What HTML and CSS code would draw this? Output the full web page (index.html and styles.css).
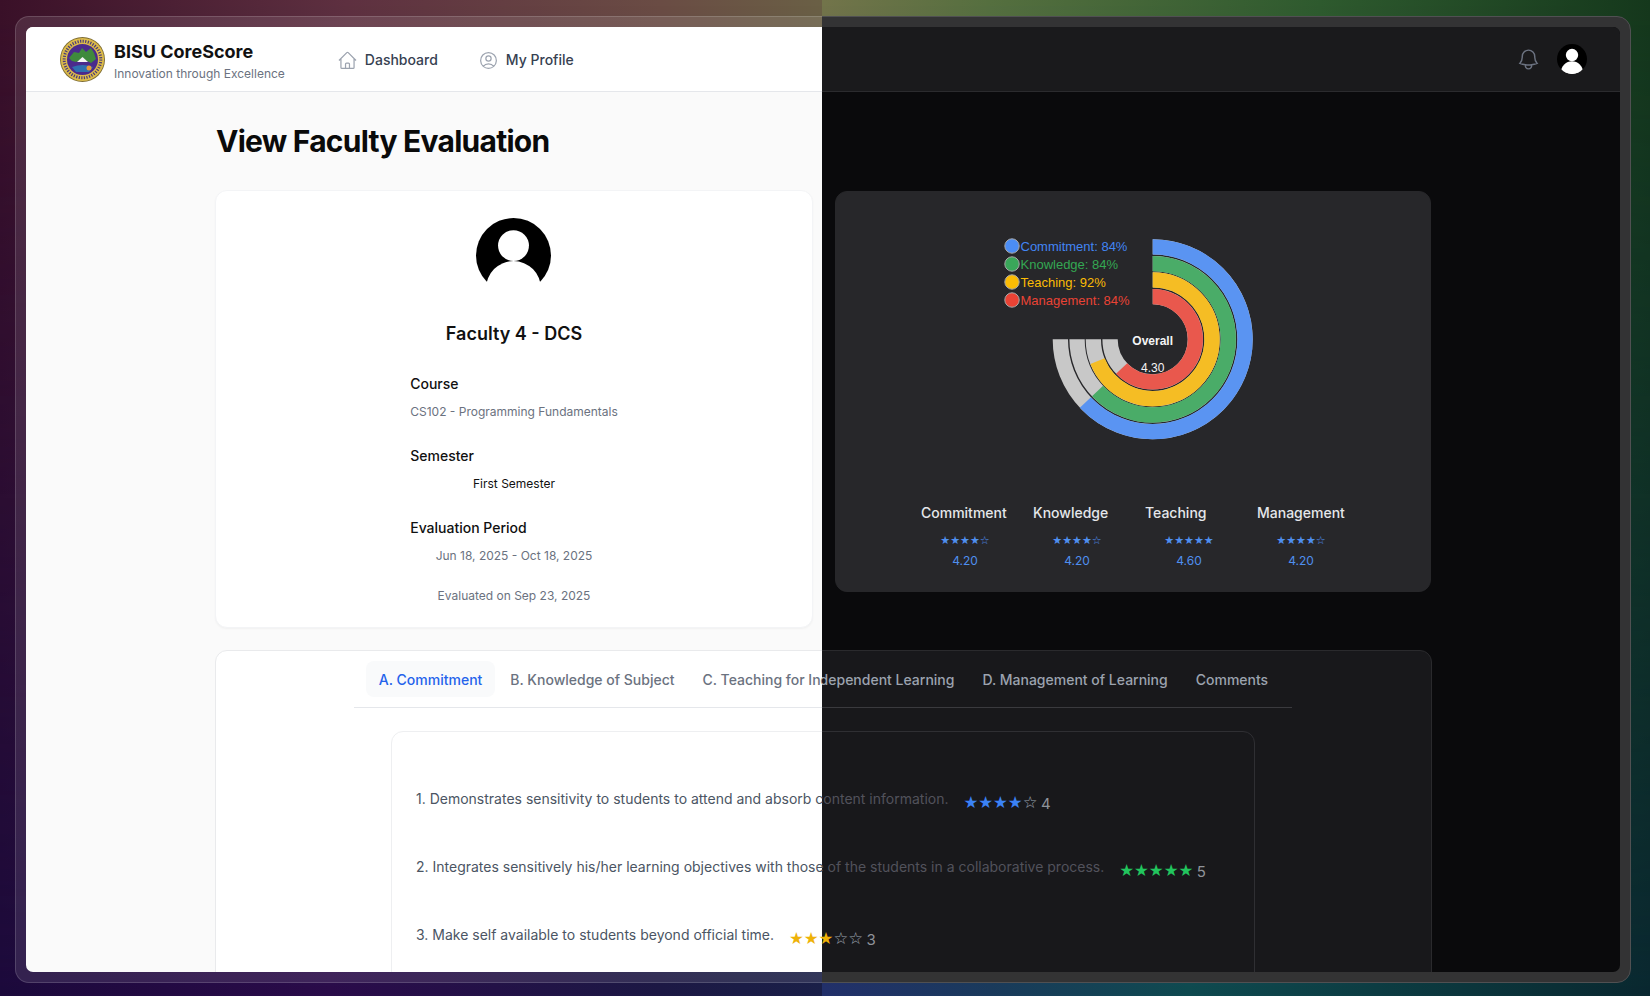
FILE: index.html
```html
<!DOCTYPE html>
<html lang="en">
<head>
<meta charset="utf-8">
<title>BISU CoreScore - View Faculty Evaluation</title>
<link rel="stylesheet" href="styles.css">
</head>
<body>
<div class="stage">

<section class="layer theme-dark">
  <div class="frame"><div class="screen">
    <header class="topbar">
      <div class="brand">
        <svg class="seal" viewBox="0 0 45 45"><circle cx="22.5" cy="22.5" r="22.5" fill="#7d6c34"/><circle cx="22.5" cy="22.5" r="21.6" fill="#dcbb4a"/><circle cx="22.5" cy="22.5" r="18.300" fill="none" stroke="#4a3c78" stroke-width="3" stroke-dasharray="1.2 1.4"/><circle cx="22.5" cy="22.5" r="15.500" fill="#4b2a8c"/><path d="M9 21l5-6 5 1 3-5 4 4 5-4 3 5 2 6-5 4-4-2-4-2-7 3-4-1z" fill="#3f8a3c"/><path d="M17 25l5.500-5 5.500 5z" fill="#f4f4f4"/><path d="M12 30q11-4 21 0l-4 5h-13z" fill="#2f6fb0"/><circle cx="29" cy="31" r="2.500" fill="#e89a3c"/></svg>
        <div class="brand-text"><div class="brand-name">BISU CoreScore</div><div class="brand-sub">Innovation through Excellence</div></div>
      </div>
      <nav class="nav">
        <a class="nav-item"><svg class="icon" viewBox="0 0 24 24"><path d="m2.25 12 8.954-8.955c.44-.439 1.152-.439 1.591 0L21.75 12M4.500 9.750v10.125c0 .621.504 1.125 1.125 1.125H9.750v-4.875c0-.621.504-1.125 1.125-1.125h2.250c.621 0 1.125.504 1.125 1.125V21h4.125c.621 0 1.125-.504 1.125-1.125V9.750M8.250 21h8.250"/></svg>Dashboard</a>
        <a class="nav-item"><svg class="icon" viewBox="0 0 24 24"><path d="M17.982 18.725A7.488 7.488 0 0 0 12 15.750a7.488 7.488 0 0 0-5.982 2.975m11.963 0a9 9 0 1 0-11.963 0m11.963 0A8.966 8.966 0 0 1 12 21a8.966 8.966 0 0 1-5.982-2.275M15 9.750a3 3 0 1 1-6 0 3 3 0 0 1 6 0Z"/></svg>My Profile</a>
      </nav>
      <div class="top-actions">
        <svg class="icon bell" viewBox="0 0 24 24"><path d="M14.857 17.082a23.848 23.848 0 0 0 5.454-1.310A8.967 8.967 0 0 1 18 9.750V9A6 6 0 0 0 6 9v.750a8.967 8.967 0 0 1-2.312 6.022c1.733.64 3.560 1.085 5.455 1.310m5.714 0a24.255 24.255 0 0 1-5.714 0m5.714 0a3 3 0 1 1-5.714 0"/></svg>
        <svg class="avatar avatar-sm" viewBox="0 0 100 100"><rect width="100" height="100" fill="#000"/><circle cx="50" cy="36.800" r="20.600" fill="#fff"/><circle cx="50" cy="94" r="36.600" fill="#fff"/><rect x="13.400" y="94" width="73.200" height="6" fill="#fff"/></svg>
      </div>
    </header>
    <main class="main">
      <h1 class="title">View Faculty Evaluation</h1>
      <div class="summary">
        <div class="card profile">
          <svg class="avatar avatar-lg" viewBox="0 0 100 100"><rect width="100" height="85" fill="#000"/><circle cx="50" cy="36.800" r="20.600" fill="#fff"/><circle cx="50" cy="94" r="36.600" fill="#fff"/></svg>
          <h2 class="faculty">Faculty 4 - DCS</h2>
          <div class="info">
            <div class="info-label">Course</div><div class="info-value muted">CS102 - Programming Fundamentals</div>
            <div class="info-label spaced">Semester</div><div class="info-value strong">First Semester</div>
            <div class="info-label spaced">Evaluation Period</div><div class="info-value muted">Jun 18, 2025 - Oct 18, 2025</div>
            <div class="info-value muted evaluated">Evaluated on Sep 23, 2025</div>
          </div>
        </div>
        <div class="card scores">
          <svg class="chart" viewBox="0 0 320 260">
            <g class="rings">
              <path class="ring grey" d="M0 -92.350A92.350 92.350 0 1 1 -92.350 0"/><path class="ring c-blue" d="M0 -92.350A92.350 92.350 0 1 1 -67.320 63.210"/>
              <path class="ring grey" d="M0 -75.650A75.650 75.650 0 1 1 -75.650 0"/><path class="ring c-green" d="M0 -75.650A75.650 75.650 0 1 1 -55.150 51.780"/>
              <path class="ring grey" d="M0 -59.350A59.350 59.350 0 1 1 -59.350 0"/><path class="ring c-yellow" d="M0 -59.350A59.350 59.350 0 1 1 -55.180 21.850"/>
              <path class="ring grey" d="M0 -42.650A42.650 42.650 0 1 1 -42.650 0"/><path class="ring c-red" d="M0 -42.650A42.650 42.650 0 1 1 -31.090 29.190"/>
            </g>
            <circle class="dot d-blue" cx="39" cy="36" r="7.200"/><text class="legend t-blue" x="47.500" y="40.500">Commitment: 84%</text>
            <circle class="dot d-green" cx="39" cy="54" r="7.200"/><text class="legend t-green" x="47.500" y="58.500">Knowledge: 84%</text>
            <circle class="dot d-yellow" cx="39" cy="72" r="7.200"/><text class="legend t-yellow" x="47.500" y="76.500">Teaching: 92%</text>
            <circle class="dot d-red" cx="39" cy="90" r="7.200"/><text class="legend t-red" x="47.500" y="94.500">Management: 84%</text>
            <text class="center-label" x="179.700" y="135">Overall</text>
            <text class="center-value" x="179.700" y="162">4.30</text>
          </svg>
          <div class="stats">
            <div class="stat"><div class="stat-label">Commitment</div><div class="stat-stars">★★★★☆</div><div class="stat-value">4.20</div></div>
            <div class="stat"><div class="stat-label">Knowledge</div><div class="stat-stars">★★★★☆</div><div class="stat-value">4.20</div></div>
            <div class="stat"><div class="stat-label">Teaching</div><div class="stat-stars">★★★★★</div><div class="stat-value">4.60</div></div>
            <div class="stat"><div class="stat-label">Management</div><div class="stat-stars">★★★★☆</div><div class="stat-value">4.20</div></div>
          </div>
        </div>
      </div>
      <div class="card panel">
        <div class="tabs">
          <a class="tab active">A. Commitment</a><a class="tab">B. Knowledge of Subject</a><a class="tab">C. Teaching for Independent Learning</a><a class="tab">D. Management of Learning</a><a class="tab">Comments</a>
        </div>
        <div class="questions">
          <div class="q"><span class="q-text">1. Demonstrates sensitivity to students to attend and absorb content information.</span><span class="rate"><span class="stars blue">★★★★</span><span class="stars off">☆</span><span class="num">4</span></span></div>
          <div class="q"><span class="q-text">2. Integrates sensitively his/her learning objectives with those of the students in a collaborative process.</span><span class="rate"><span class="stars green">★★★★★</span><span class="num">5</span></span></div>
          <div class="q"><span class="q-text">3. Make self available to students beyond official time.</span><span class="rate"><span class="stars amber">★★★</span><span class="stars off">☆☆</span><span class="num">3</span></span></div>
        </div>
      </div>
    </main>
  </div></div>
</section>

<section class="layer theme-light">
  <div class="frame"><div class="screen">
    <header class="topbar">
      <div class="brand">
        <svg class="seal" viewBox="0 0 45 45"><circle cx="22.5" cy="22.5" r="22.5" fill="#7d6c34"/><circle cx="22.5" cy="22.5" r="21.6" fill="#dcbb4a"/><circle cx="22.5" cy="22.5" r="18.300" fill="none" stroke="#4a3c78" stroke-width="3" stroke-dasharray="1.2 1.4"/><circle cx="22.5" cy="22.5" r="15.500" fill="#4b2a8c"/><path d="M9 21l5-6 5 1 3-5 4 4 5-4 3 5 2 6-5 4-4-2-4-2-7 3-4-1z" fill="#3f8a3c"/><path d="M17 25l5.500-5 5.500 5z" fill="#f4f4f4"/><path d="M12 30q11-4 21 0l-4 5h-13z" fill="#2f6fb0"/><circle cx="29" cy="31" r="2.500" fill="#e89a3c"/></svg>
        <div class="brand-text"><div class="brand-name">BISU CoreScore</div><div class="brand-sub">Innovation through Excellence</div></div>
      </div>
      <nav class="nav">
        <a class="nav-item"><svg class="icon" viewBox="0 0 24 24"><path d="m2.25 12 8.954-8.955c.44-.439 1.152-.439 1.591 0L21.75 12M4.500 9.750v10.125c0 .621.504 1.125 1.125 1.125H9.750v-4.875c0-.621.504-1.125 1.125-1.125h2.250c.621 0 1.125.504 1.125 1.125V21h4.125c.621 0 1.125-.504 1.125-1.125V9.750M8.250 21h8.250"/></svg>Dashboard</a>
        <a class="nav-item"><svg class="icon" viewBox="0 0 24 24"><path d="M17.982 18.725A7.488 7.488 0 0 0 12 15.750a7.488 7.488 0 0 0-5.982 2.975m11.963 0a9 9 0 1 0-11.963 0m11.963 0A8.966 8.966 0 0 1 12 21a8.966 8.966 0 0 1-5.982-2.275M15 9.750a3 3 0 1 1-6 0 3 3 0 0 1 6 0Z"/></svg>My Profile</a>
      </nav>
    </header>
    <main class="main">
      <h1 class="title">View Faculty Evaluation</h1>
      <div class="summary">
        <div class="card profile">
          <svg class="avatar avatar-lg" viewBox="0 0 100 100"><rect width="100" height="85" fill="#000"/><circle cx="50" cy="36.800" r="20.600" fill="#fff"/><circle cx="50" cy="94" r="36.600" fill="#fff"/></svg>
          <h2 class="faculty">Faculty 4 - DCS</h2>
          <div class="info">
            <div class="info-label">Course</div><div class="info-value muted">CS102 - Programming Fundamentals</div>
            <div class="info-label spaced">Semester</div><div class="info-value strong">First Semester</div>
            <div class="info-label spaced">Evaluation Period</div><div class="info-value muted">Jun 18, 2025 - Oct 18, 2025</div>
            <div class="info-value muted evaluated">Evaluated on Sep 23, 2025</div>
          </div>
        </div>
      </div>
      <div class="card panel">
        <div class="tabs">
          <a class="tab active">A. Commitment</a><a class="tab">B. Knowledge of Subject</a><a class="tab">C. Teaching for Independent Learning</a><a class="tab">D. Management of Learning</a><a class="tab">Comments</a>
        </div>
        <div class="questions">
          <div class="q"><span class="q-text">1. Demonstrates sensitivity to students to attend and absorb content information.</span></div>
          <div class="q"><span class="q-text">2. Integrates sensitively his/her learning objectives with those of the students in a collaborative process.</span></div>
          <div class="q"><span class="q-text">3. Make self available to students beyond official time.</span><span class="rate"><span class="stars amber">★★★</span></span></div>
        </div>
      </div>
    </main>
  </div></div>
</section>

</div>
</body>
</html>
```
FILE: styles.css
```css
* { box-sizing: border-box; }
html, body { margin: 0; padding: 0; }
body { font-family: "Inter", "Liberation Sans", sans-serif; overflow: hidden; }

.stage { position: relative; width: 1650px; height: 996px; overflow: hidden; }

/* theme tokens */
.theme-light {
  --band-top: linear-gradient(90deg, #3a1028 0%, #5e3040 21%, #6a4c44 40%, #6a6045 50%);
  --band-bottom: linear-gradient(90deg, #1c0a3c 0%, #2a0c4a 20%, #1c1844 40%, #1a2048 50%);
  --frame-bg: rgba(255,255,255,.1);
  --frame-line: rgba(255,255,255,.15);
  --page: #fafafa;
  --bar: #fff;
  --bar-line: #e5e7eb;
  --card: #fff;
  --card-line: #f3f4f6;
  --panel: #fff;
  --panel-line: #e9eaec;
  --heading: #0a0a0a;
  --text: #111;
  --muted: #6b7280;
  --nav: #374151;
  --icon: #9ca3af;
  --tab: #6b7280;
  --tab-active: #2563eb;
  --tab-bg: #f9fafb;
  --rule: #e5e7eb;
  --q-line: #eeeff1;
  --q-text: #4b5563;
  --num: #6b7280;
  --off: #6b7280;
}
.theme-dark {
  --band-top: linear-gradient(90deg, #72744a 50%, #556f3f 60%, #2e5a2e 80%, #15381c 100%);
  --band-bottom: linear-gradient(90deg, #22306a 50%, #1a3a5c 60%, #0f4a50 72%, #0a2830 100%);
  --frame-bg: #333334;
  --frame-line: #505052;
  --page: #0a0a0c;
  --bar: #1a1a1c;
  --bar-line: #2b2b2e;
  --card: #27272a;
  --card-line: #27272a;
  --panel: #18181b;
  --panel-line: #2a2a2d;
  --heading: #0a0a0a;
  --text: #f4f4f5;
  --muted: #9ca3af;
  --nav: #d1d5db;
  --icon: #6b7280;
  --tab: #9ca3af;
  --tab-active: #2563eb;
  --tab-bg: transparent;
  --rule: #3a3a3e;
  --q-line: #2f2f33;
  --q-text: #52525b;
  --num: #8f939a;
  --off: #9ca3af;
}

.layer { position: relative; width: 1650px; height: 996px; background-image: var(--band-bottom); overflow: hidden; }
.layer::before {
  content: ""; position: absolute; inset: 0; background-image: var(--band-top);
  -webkit-mask-image: linear-gradient(to bottom, #000, transparent);
  mask-image: linear-gradient(to bottom, #000, transparent);
}
.theme-light { position: absolute; inset: 0; clip-path: inset(0 828px 0 0); }

.frame {
  position: relative; width: 1616px; height: 967px; margin: 16px 0 0 15px; padding: 10px;
  background: var(--frame-bg); border: 1px solid var(--frame-line); border-radius: 14px;
}
.screen { width: 100%; height: 100%; overflow: hidden; border-radius: 7px; background: var(--page); }

/* top bar */
.topbar {
  display: flex; align-items: center; height: 65px; padding: 0 33px 0 34px;
  background: var(--bar); border-bottom: 1px solid var(--bar-line);
}
.brand { display: flex; align-items: center; gap: 9px; }
.seal { width: 45px; height: 45px; flex: none; }
.brand-text { padding-top: 1px; }
.brand-name { font-size: 18px; line-height: 28px; font-weight: 700; color: var(--text); }
.brand-sub { font-size: 12px; line-height: 16px; color: var(--muted); }
.nav { display: flex; align-items: center; gap: 40px; margin-left: 52px; padding-top: 2px; }
.nav-item { display: flex; align-items: center; gap: 7px; font-size: 14px; line-height: 20px; font-weight: 500; color: var(--nav); }
.icon { width: 21px; height: 21px; fill: none; stroke: var(--icon); stroke-width: 1.4; flex: none; }
.top-actions { display: flex; align-items: center; gap: 16px; margin-left: auto; }
.bell { width: 25px; height: 25px; }
.avatar { display: block; border-radius: 50%; }
.avatar-sm { width: 30px; height: 30px; }
.avatar-lg { width: 75px; height: 75px; margin-left: calc(50% - 38px); }

/* main column */
.main { width: 1216px; margin: 0 auto; padding-top: 31px; }
.title { margin: 0 0 32px; padding-left: 1px; font-size: 30px; line-height: 36px; font-weight: 700; letter-spacing: -.025em; color: var(--heading); }
.summary { display: grid; grid-template-columns: 598px 596px; column-gap: 22px; align-items: start; margin-bottom: 22px; }
.card { border-radius: 12px; background: var(--card); border: 1px solid var(--card-line); }

.profile { margin-top: -1px; padding: 27px 0 23px; box-shadow: 0 1px 2px rgba(0,0,0,.04); }
.faculty { margin: 27px 0 0; font-size: 18px; line-height: 28px; font-weight: 600; text-align: center; color: var(--text); }
.info { width: fit-content; margin: 26px auto 0; }
.info-label { font-size: 14px; line-height: 20px; font-weight: 500; color: var(--text); }
.info-label.spaced { margin-top: 26px; }
.info-value { margin-top: 10px; font-size: 12px; line-height: 16px; text-align: center; }
.muted { color: var(--muted); }
.strong { color: var(--text); }
.evaluated { margin-top: 24px; }

/* score card */
.scores { padding: 18px 0 22px; }
.chart { display: block; width: 320px; height: 260px; margin: 0 auto; }
.rings { transform: translate(179.7px, 129.3px); }
.ring { fill: none; stroke-width: 15.3; }
.grey { stroke: #c8c8c8; }
.c-blue { stroke: #5a94f2; }
.c-green { stroke: #4aac68; }
.c-yellow { stroke: #f5bd24; }
.c-red { stroke: #e9584d; }
.dot { stroke: #a8a8a8; stroke-width: 1; }
.d-blue { fill: #4b8df5; }
.d-green { fill: #3aa75a; }
.d-yellow { fill: #fbbc05; }
.d-red { fill: #ea4335; }
.legend { font-family: "Liberation Sans", Arial, sans-serif; font-size: 13px; }
.t-blue { fill: #4285f4; }
.t-green { fill: #34a853; }
.t-yellow { fill: #fbbc05; }
.t-red { fill: #ea4335; }
.center-label { font-family: "Liberation Sans", Arial, sans-serif; font-size: 12px; font-weight: 700; fill: #f4f4f5; text-anchor: middle; }
.center-value { font-family: "Liberation Sans", Arial, sans-serif; font-size: 12px; fill: #f4f4f5; text-anchor: middle; }
.stats { display: grid; grid-template-columns: repeat(4, 112px); justify-content: center; margin-top: 33px; }
.stat-label { padding-left: 12px; font-size: 14px; line-height: 20px; font-weight: 500; color: #e5e7eb; white-space: nowrap; }
.stat-stars { margin-top: 10px; font-family: "DejaVu Sans", sans-serif; font-size: 11px; line-height: 16px; text-align: center; color: #4f8fef; }
.stat-value { margin-top: 4px; font-size: 12px; line-height: 16px; text-align: center; color: #4f8fef; }

/* evaluation panel */
.panel { width: 1217px; height: 340px; background: var(--panel); border-color: var(--panel-line); }
.tabs {
  display: flex; justify-content: center; gap: 4px; width: 938px; margin-left: 138px; padding: 10px 0;
  border-bottom: 1px solid var(--rule);
}
.theme-light .tabs { padding-left: 2px; }
.tab { padding: 9px 12px 7px; border-radius: 8px; font-size: 14px; line-height: 20px; font-weight: 500; color: var(--tab); white-space: nowrap; }
.tab.active { margin: 0 -1px; padding: 9px 13px 7px; color: var(--tab-active); background: var(--tab-bg); }
.questions {
  width: 864px; height: 300px; margin: 23px 0 0 175px; padding: 57px 24px 0;
  border: 1px solid var(--q-line); border-radius: 12px;
}
.q { display: flex; align-items: flex-start; gap: 15px; height: 28px; margin-bottom: 40px; }
.q-text { font-size: 14px; line-height: 20px; color: var(--q-text); white-space: nowrap; }
.rate { display: flex; align-items: center; height: 28px; }
.stars { font-family: "DejaVu Sans", sans-serif; font-size: 16.5px; line-height: 28px; }
.blue { color: #3b82f6; }
.green { color: #22c55e; }
.amber { color: #eeb208; }
.off { color: var(--off); }
.num { margin-left: 3.5px; font-size: 15px; color: var(--num); }
```
